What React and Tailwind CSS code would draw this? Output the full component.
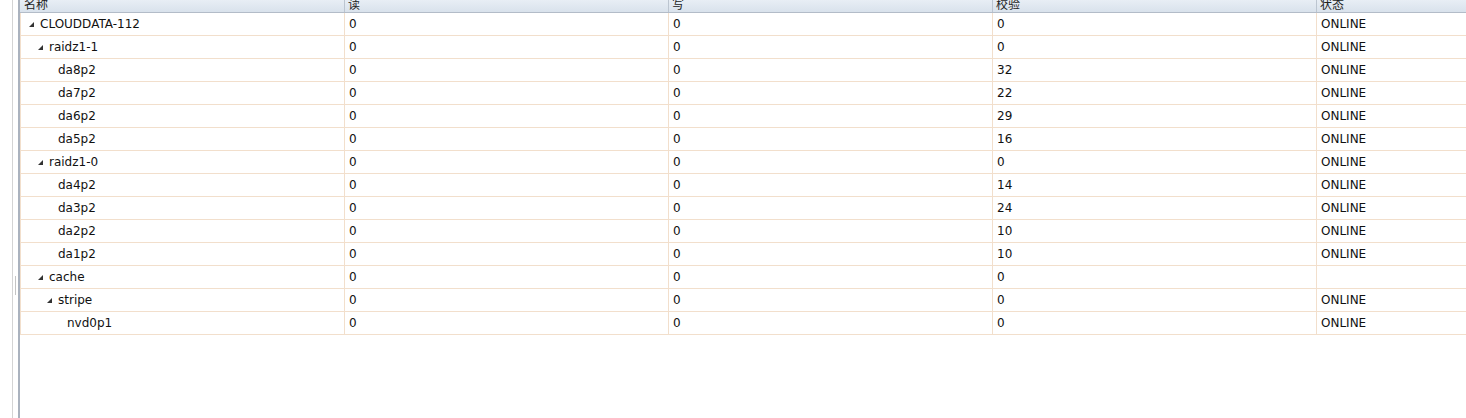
const columns = ["名称", "读", "写", "校验", "状态"];

const rows = [
  { name: "CLOUDDATA-112", level: 0, open: true, read: 0, write: 0, cksum: 0, state: "ONLINE" },
  { name: "raidz1-1", level: 1, open: true, read: 0, write: 0, cksum: 0, state: "ONLINE" },
  { name: "da8p2", level: 2, read: 0, write: 0, cksum: 32, state: "ONLINE" },
  { name: "da7p2", level: 2, read: 0, write: 0, cksum: 22, state: "ONLINE" },
  { name: "da6p2", level: 2, read: 0, write: 0, cksum: 29, state: "ONLINE" },
  { name: "da5p2", level: 2, read: 0, write: 0, cksum: 16, state: "ONLINE" },
  { name: "raidz1-0", level: 1, open: true, read: 0, write: 0, cksum: 0, state: "ONLINE" },
  { name: "da4p2", level: 2, read: 0, write: 0, cksum: 14, state: "ONLINE" },
  { name: "da3p2", level: 2, read: 0, write: 0, cksum: 24, state: "ONLINE" },
  { name: "da2p2", level: 2, read: 0, write: 0, cksum: 10, state: "ONLINE" },
  { name: "da1p2", level: 2, read: 0, write: 0, cksum: 10, state: "ONLINE" },
  { name: "cache", level: 1, open: true, read: 0, write: 0, cksum: 0, state: "" },
  { name: "stripe", level: 2, open: true, read: 0, write: 0, cksum: 0, state: "ONLINE" },
  { name: "nvd0p1", level: 3, read: 0, write: 0, cksum: 0, state: "ONLINE" },
];

const indents = ["ml-[8px]", "ml-[17px]", "ml-[26px]", "ml-[35px]"];
const leafIndents = ["pl-[19px]", "pl-[28px]", "pl-[37px]", "pl-[46px]"];

const Expander = () => (
  <svg width="5" height="5" viewBox="0 0 5 5" className="shrink-0">
    <polygon points="5,0 5,5 0,5" fill="#333" />
  </svg>
);

function NameCell({ row }) {
  if (row.open) {
    return (
      <div className="flex items-center w-[324px] shrink-0 border-r border-[#f2dfcc]">
        <div className={"flex items-center " + indents[row.level]}>
          <Expander />
        </div>
        <span className="ml-[6px]">{row.name}</span>
      </div>
    );
  }
  return (
    <div className={"w-[324px] shrink-0 border-r border-[#f2dfcc] " + leafIndents[row.level]}>
      {row.name}
    </div>
  );
}

function Cell({ children }) {
  return (
    <div className="w-[324px] shrink-0 border-r border-[#f2dfcc] pl-[4px]">{children}</div>
  );
}

export default function App() {
  return (
    <div className="w-[1466px] h-[418px] flex bg-white overflow-hidden font-['DejaVu_Sans',sans-serif] text-[12px] text-[#111]">
      <div className="w-[12px] shrink-0" />
      <div className="w-px shrink-0 bg-[#d4d4d4]" />
      <div className="w-[5px] shrink-0 pl-[2px] pt-[276px]">
        <div className="w-px h-[19px] bg-[#c4c4c4]" />
      </div>
      <div className="flex-1 flex flex-col border-l-2 border-[#aab2be] min-w-0">
        <div className="flex h-[13px] shrink-0 overflow-hidden bg-gradient-to-b from-[#e8eef5] to-[#d9e2ec] border-b border-[#b3bcc8]">
          {columns.map((c, i) => (
            <div
              key={c}
              className={
                "shrink-0 border-r border-[#bcc5d0] font-['Noto_Sans_CJK_SC',sans-serif] leading-[12px] text-[#222] " +
                (i === 0 ? "w-[325px] pl-[4px]" : "w-[324px] pl-[3px]")
              }
            >
              <span className="block -translate-y-[2px]">{c}</span>
            </div>
          ))}
        </div>
        <div className="flex flex-col">
          {rows.map((r) => (
            <div
              key={r.name}
              className="flex h-[23px] leading-[22px] border-b border-l border-[#f2dfcc] shrink-0"
            >
              <NameCell row={r} />
              <Cell>{r.read}</Cell>
              <Cell>{r.write}</Cell>
              <Cell>{r.cksum}</Cell>
              <Cell>{r.state}</Cell>
            </div>
          ))}
        </div>
      </div>
    </div>
  );
}
